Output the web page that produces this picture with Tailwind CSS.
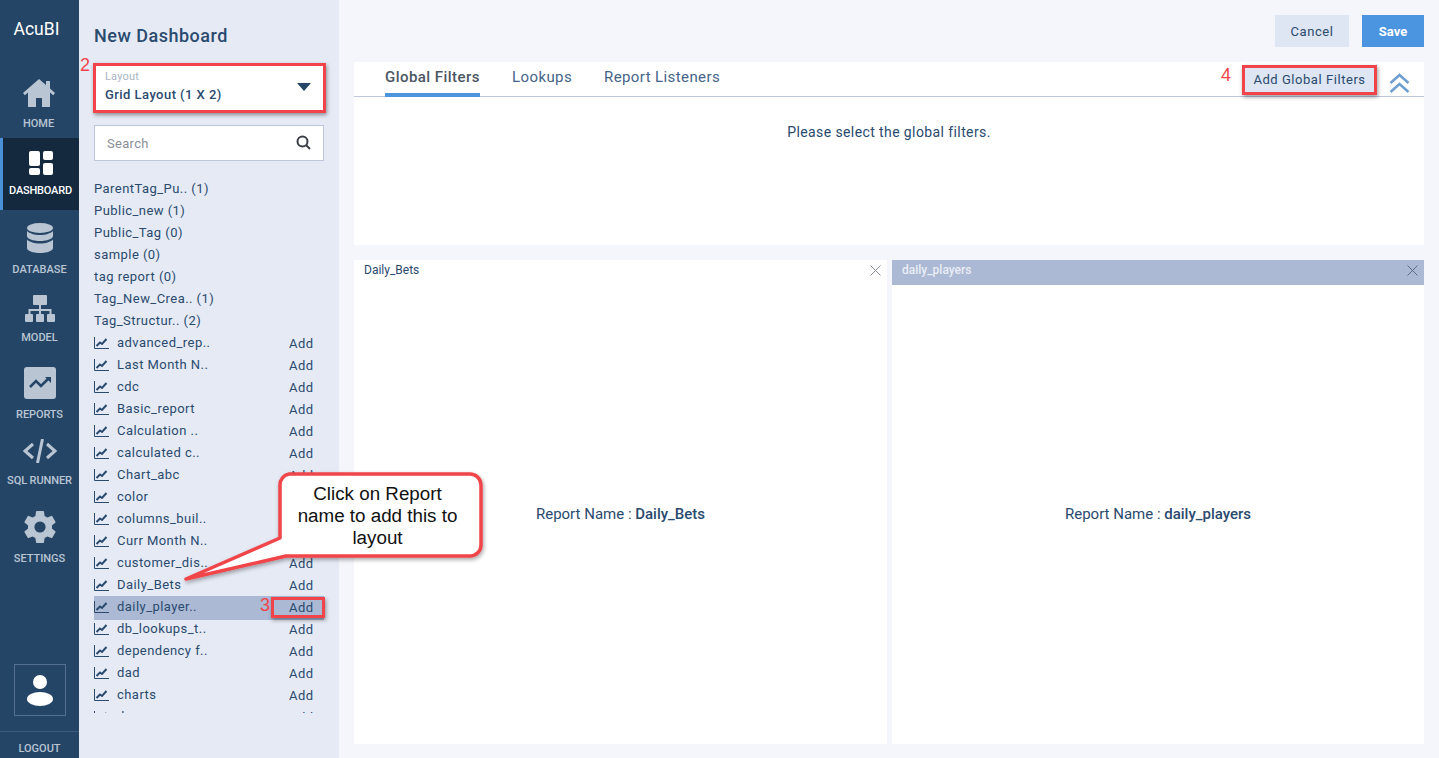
<!DOCTYPE html>
<html lang="en">
<head>
    <meta charset="UTF-8">
    <title>AcuBI - New Dashboard</title>
    <script src="https://cdn.jsdelivr.net/npm/@tailwindcss/browser@4"></script>
</head>
<body class="font-['Roboto',sans-serif] bg-[#f4f6fb] text-[#2a4a6e] overflow-hidden">
<div class="relative flex w-[1439px] h-[758px] overflow-hidden">

    <!-- nav -->
    <aside class="w-[79px] shrink-0 bg-[#254567] flex flex-col text-[#b9c5d3] text-[11px] font-medium">
        <div class="h-[68px] pt-[19px] pr-[6px] text-center text-white text-[17.500px] leading-[20px] font-normal">AcuBI</div>
        <a class="h-[70px] flex flex-col items-center">
            <svg class="mt-[10px] w-[34px] h-[30px] -ml-[2px]" viewBox="0 0 34 30" fill="#b9c5d3"><path d="M17 1 1 15l1.800 2.200L6 14.600V29h8v-9h6v9h8V14.600l3.200 2.600L33 15l-5-4.400V3h-4v4L17 1z"/></svg>
            <span class="mt-[9px] -ml-[2px] leading-[14px]">HOME</span>
        </a>
        <a class="h-[72px] flex flex-col items-center bg-[#14283e] border-l-[3px] border-[#4a90d9] text-white">
            <svg class="mt-[13px] w-[24px] h-[24px]" viewBox="0 0 24 24" fill="#fff"><rect x="0" y="0" width="11" height="15" rx="2"/><rect x="14" y="0" width="10" height="9" rx="2"/><rect x="0" y="17" width="11" height="7" rx="2"/><rect x="14" y="12" width="10" height="12" rx="2"/></svg>
            <span class="mt-[9px] -ml-[1px] leading-[14px] tracking-[-0.2px]">DASHBOARD</span>
        </a>
        <a class="h-[72px] flex flex-col items-center">
            <svg class="mt-[13px] w-[26px] h-[30px]" viewBox="0 0 26 30" fill="#b9c5d3"><ellipse cx="13" cy="5" rx="13" ry="5"/><path d="M0 8v5c0 2.800 5.800 5 13 5s13-2.200 13-5V8c-2.500 2.500-7.500 4-13 4S2.500 10.500 0 8z"/><path d="M0 16.500V25c0 2.800 5.800 5 13 5s13-2.200 13-5v-8.500c-2.500 2.500-7.500 4-13 4s-10.500-1.500-13-4z"/></svg>
            <span class="mt-[10px] leading-[14px]">DATABASE</span>
        </a>
        <a class="h-[68px] flex flex-col items-center">
            <svg class="mt-[13px] w-[30px] h-[28px]" viewBox="0 0 30 28" fill="#b9c5d3"><rect x="8" y="0" width="14" height="10" rx="1"/><rect x="14" y="10" width="2" height="9"/><path d="M3.500 19v-5h23v5h-2v-3h-19v3z"/><rect x="0" y="19" width="8" height="8" rx="1"/><rect x="11" y="19" width="8" height="8" rx="1"/><rect x="22" y="19" width="8" height="8" rx="1"/></svg>
            <span class="mt-[8px] leading-[14px]">MODEL</span>
        </a>
        <a class="h-[75px] flex flex-col items-center">
            <svg class="mt-[17px] w-[32px] h-[32px]" viewBox="0 0 32 32"><rect width="32" height="32" rx="3" fill="#b9c5d3"/><path d="M6 20l6-6 5 5 8-8" fill="none" stroke="#254567" stroke-width="2.500"/><path d="M21 10h6v6z" fill="#254567"/></svg>
            <span class="mt-[9px] leading-[14px] tracking-[-0.1px]">REPORTS</span>
        </a>
        <a class="h-[67px] flex flex-col items-center">
            <svg class="mt-[14px] w-[36px] h-[24px]" viewBox="0 0 36 24" fill="none" stroke="#b9c5d3" stroke-width="3"><path d="M11 5 3 12l8 7M25 5l8 7-8 7"/><path d="M20.500 0 15.500 24"/></svg>
            <span class="mt-[11px] leading-[14px] tracking-[-0.1px] whitespace-nowrap">SQL RUNNER</span>
        </a>
        <a class="h-[78px] flex flex-col items-center">
            <svg class="mt-[19px] w-[32px] h-[32px]" viewBox="2 2 20 20" fill="#b9c5d3"><path d="M19.430 12.980c.04-.32.070-.64.070-.98s-.03-.66-.07-.98l2.110-1.650c.19-.15.240-.42.120-.64l-2-3.460c-.12-.22-.39-.3-.61-.22l-2.490 1c-.52-.4-1.080-.73-1.690-.98l-.38-2.650A.488.488 0 0 0 14 2h-4c-.25 0-.46.180-.49.420l-.38 2.650c-.61.250-1.170.59-1.690.98l-2.490-1c-.23-.09-.49 0-.61.220l-2 3.460c-.13.220-.07.490.12.640l2.110 1.650c-.04.320-.07.650-.07.980s.03.660.07.980l-2.110 1.650c-.19.150-.24.420-.12.640l2 3.460c.12.220.39.300.61.220l2.490-1c.52.400 1.080.730 1.690.980l.38 2.650c.03.240.24.420.49.420h4c.25 0 .46-.18.49-.42l.38-2.650c.61-.25 1.170-.59 1.690-.98l2.490 1c.23.090.49 0 .61-.22l2-3.460c.12-.22.070-.49-.12-.64l-2.110-1.650zM12 15.500a3.500 3.500 0 1 1 0-7 3.500 3.500 0 0 1 0 7z"/></svg>
            <span class="mt-[9px] leading-[14px]">SETTINGS</span>
        </a>
        <div class="mt-[94px] ml-[14px] w-[52px] h-[52px] border border-[#54708e] flex items-center justify-center">
            <svg class="w-[28px] h-[32px]" viewBox="0 0 28 32" fill="#fff"><circle cx="14" cy="8" r="7"/><ellipse cx="14" cy="25" rx="13" ry="7"/></svg>
        </div>
        <div class="mt-[15px] border-t border-[#3f5c7c] pt-[10px] text-center leading-[14px]">LOGOUT</div>
    </aside>

    <!-- report list -->
    <section class="w-[260px] shrink-0 bg-[#e6eaf5] px-[15px] flex flex-col">
        <h1 class="mt-[25px] text-[18px] leading-[22px] font-medium tracking-[0.5px]">New Dashboard</h1>
        <div class="mt-[19px] h-[45px] bg-white px-[11px] pt-[5px] flex justify-between">
            <div>
                <div class="text-[11px] leading-[12px] text-[#aab4c4] tracking-[0.2px]">Layout</div>
                <div class="mt-[3px] text-[13px] leading-[18px] font-medium tracking-[0.45px]">Grid Layout (1 X 2)</div>
            </div>
            <svg class="mt-[12px] mr-[2px] w-[14px] h-[8px]" viewBox="0 0 14 8" fill="#254567"><path d="M0 0h14L7 8z"/></svg>
        </div>
        <div class="mt-[14px] h-[36px] bg-white border border-[#bcc7dc] px-[12px] flex items-center justify-between text-[13px] text-[#8a8f98] tracking-[0.3px]">
            <span class="mt-[2px]">Search</span>
            <svg class="w-[15px] h-[15px] -mt-[2px]" viewBox="0 0 15 15" fill="none" stroke="#3a3f45" stroke-width="2"><circle cx="6.500" cy="6.500" r="5"/><path d="m10 10 4 4"/></svg>
        </div>

        <div class="mt-[17px] text-[13px] leading-[22px] tracking-[0.45px]">
            <div>ParentTag_Pu.. (1)</div>
            <div>Public_new (1)</div>
            <div>Public_Tag (0)</div>
            <div>sample (0)</div>
            <div>tag report (0)</div>
            <div>Tag_New_Crea.. (1)</div>
            <div>Tag_Structur.. (2)</div>
            <!-- reports -->
            <div class="h-[381px] overflow-hidden">
                <div class="flex items-center h-[22px]"><svg class="w-[15px] h-[12px] mr-[8px]" viewBox="0 0 15 12" fill="none" stroke="#2a4a6e"><path d="M.5 0v11.500H15"/><path d="m2.500 9 3.500-3.500 2 1.500 4.500-5" stroke-width="2"/></svg><span class="flex-1">advanced_rep..</span><span class="w-[35px] mt-[2px]">Add</span></div>
                <div class="flex items-center h-[22px]"><svg class="w-[15px] h-[12px] mr-[8px]" viewBox="0 0 15 12" fill="none" stroke="#2a4a6e"><path d="M.5 0v11.500H15"/><path d="m2.500 9 3.500-3.500 2 1.500 4.500-5" stroke-width="2"/></svg><span class="flex-1">Last Month N..</span><span class="w-[35px] mt-[2px]">Add</span></div>
                <div class="flex items-center h-[22px]"><svg class="w-[15px] h-[12px] mr-[8px]" viewBox="0 0 15 12" fill="none" stroke="#2a4a6e"><path d="M.5 0v11.500H15"/><path d="m2.500 9 3.500-3.500 2 1.500 4.500-5" stroke-width="2"/></svg><span class="flex-1">cdc</span><span class="w-[35px] mt-[2px]">Add</span></div>
                <div class="flex items-center h-[22px]"><svg class="w-[15px] h-[12px] mr-[8px]" viewBox="0 0 15 12" fill="none" stroke="#2a4a6e"><path d="M.5 0v11.500H15"/><path d="m2.500 9 3.500-3.500 2 1.500 4.500-5" stroke-width="2"/></svg><span class="flex-1">Basic_report</span><span class="w-[35px] mt-[2px]">Add</span></div>
                <div class="flex items-center h-[22px]"><svg class="w-[15px] h-[12px] mr-[8px]" viewBox="0 0 15 12" fill="none" stroke="#2a4a6e"><path d="M.5 0v11.500H15"/><path d="m2.500 9 3.500-3.500 2 1.500 4.500-5" stroke-width="2"/></svg><span class="flex-1">Calculation ..</span><span class="w-[35px] mt-[2px]">Add</span></div>
                <div class="flex items-center h-[22px]"><svg class="w-[15px] h-[12px] mr-[8px]" viewBox="0 0 15 12" fill="none" stroke="#2a4a6e"><path d="M.5 0v11.500H15"/><path d="m2.500 9 3.500-3.500 2 1.500 4.500-5" stroke-width="2"/></svg><span class="flex-1">calculated c..</span><span class="w-[35px] mt-[2px]">Add</span></div>
                <div class="flex items-center h-[22px]"><svg class="w-[15px] h-[12px] mr-[8px]" viewBox="0 0 15 12" fill="none" stroke="#2a4a6e"><path d="M.5 0v11.500H15"/><path d="m2.500 9 3.500-3.500 2 1.500 4.500-5" stroke-width="2"/></svg><span class="flex-1">Chart_abc</span><span class="w-[35px] mt-[2px]">Add</span></div>
                <div class="flex items-center h-[22px]"><svg class="w-[15px] h-[12px] mr-[8px]" viewBox="0 0 15 12" fill="none" stroke="#2a4a6e"><path d="M.5 0v11.500H15"/><path d="m2.500 9 3.500-3.500 2 1.500 4.500-5" stroke-width="2"/></svg><span class="flex-1">color</span><span class="w-[35px] mt-[2px]">Add</span></div>
                <div class="flex items-center h-[22px]"><svg class="w-[15px] h-[12px] mr-[8px]" viewBox="0 0 15 12" fill="none" stroke="#2a4a6e"><path d="M.5 0v11.500H15"/><path d="m2.500 9 3.500-3.500 2 1.500 4.500-5" stroke-width="2"/></svg><span class="flex-1">columns_buil..</span><span class="w-[35px] mt-[2px]">Add</span></div>
                <div class="flex items-center h-[22px]"><svg class="w-[15px] h-[12px] mr-[8px]" viewBox="0 0 15 12" fill="none" stroke="#2a4a6e"><path d="M.5 0v11.500H15"/><path d="m2.500 9 3.500-3.500 2 1.500 4.500-5" stroke-width="2"/></svg><span class="flex-1">Curr Month N..</span><span class="w-[35px] mt-[2px]">Add</span></div>
                <div class="flex items-center h-[22px]"><svg class="w-[15px] h-[12px] mr-[8px]" viewBox="0 0 15 12" fill="none" stroke="#2a4a6e"><path d="M.5 0v11.500H15"/><path d="m2.500 9 3.500-3.500 2 1.500 4.500-5" stroke-width="2"/></svg><span class="flex-1">customer_dis..</span><span class="w-[35px] mt-[2px]">Add</span></div>
                <div class="flex items-center h-[22px]"><svg class="w-[15px] h-[12px] mr-[8px]" viewBox="0 0 15 12" fill="none" stroke="#2a4a6e"><path d="M.5 0v11.500H15"/><path d="m2.500 9 3.500-3.500 2 1.500 4.500-5" stroke-width="2"/></svg><span class="flex-1">Daily_Bets</span><span class="w-[35px] mt-[2px]">Add</span></div>
                <div class="flex items-center h-[24px] pb-[2px] -mb-[2px] bg-[#abb9d4]"><svg class="w-[15px] h-[12px] mr-[8px]" viewBox="0 0 15 12" fill="none" stroke="#2a4a6e"><path d="M.5 0v11.500H15"/><path d="m2.500 9 3.500-3.500 2 1.500 4.500-5" stroke-width="2"/></svg><span class="flex-1">daily_player..</span><span class="w-[35px] mt-[2px]">Add</span></div>
                <div class="flex items-center h-[22px]"><svg class="w-[15px] h-[12px] mr-[8px]" viewBox="0 0 15 12" fill="none" stroke="#2a4a6e"><path d="M.5 0v11.500H15"/><path d="m2.500 9 3.500-3.500 2 1.500 4.500-5" stroke-width="2"/></svg><span class="flex-1">db_lookups_t..</span><span class="w-[35px] mt-[2px]">Add</span></div>
                <div class="flex items-center h-[22px]"><svg class="w-[15px] h-[12px] mr-[8px]" viewBox="0 0 15 12" fill="none" stroke="#2a4a6e"><path d="M.5 0v11.500H15"/><path d="m2.500 9 3.500-3.500 2 1.500 4.500-5" stroke-width="2"/></svg><span class="flex-1">dependency f..</span><span class="w-[35px] mt-[2px]">Add</span></div>
                <div class="flex items-center h-[22px]"><svg class="w-[15px] h-[12px] mr-[8px]" viewBox="0 0 15 12" fill="none" stroke="#2a4a6e"><path d="M.5 0v11.500H15"/><path d="m2.500 9 3.500-3.500 2 1.500 4.500-5" stroke-width="2"/></svg><span class="flex-1">dad</span><span class="w-[35px] mt-[2px]">Add</span></div>
                <div class="flex items-center h-[22px]"><svg class="w-[15px] h-[12px] mr-[8px]" viewBox="0 0 15 12" fill="none" stroke="#2a4a6e"><path d="M.5 0v11.500H15"/><path d="m2.500 9 3.500-3.500 2 1.500 4.500-5" stroke-width="2"/></svg><span class="flex-1">charts</span><span class="w-[35px] mt-[2px]">Add</span></div>
                <div class="flex items-center h-[22px]"><svg class="w-[15px] h-[12px] mr-[8px]" viewBox="0 0 15 12" fill="none" stroke="#2a4a6e"><path d="M.5 0v11.500H15"/><path d="m2.500 9 3.500-3.500 2 1.500 4.500-5" stroke-width="2"/></svg><span class="flex-1">dew</span><span class="w-[35px] mt-[2px]">Add</span></div>
            </div>
        </div>
    </section>

    <!-- main -->
    <main class="flex-1 pl-[15px] pr-[15px] flex flex-col">
        <div class="h-[62px] pt-[15px] flex justify-end gap-[13px] text-[13px]">
            <button class="w-[74px] h-[32px] pt-[1px] bg-[#dee5f3] tracking-[0.55px]">Cancel</button>
            <button class="w-[62px] h-[32px] pt-[1px] bg-[#4a94e0] text-white font-bold">Save</button>
        </div>
        <div class="h-[183px] bg-white flex flex-col">
            <div class="h-[35px] border-b border-[#bcc7dc] pl-[31px] flex text-[15px] leading-[30px] tracking-[0.4px]">
                <div class="w-[95px] h-[35px] border-b-[4px] border-[#4a94e0] text-[#4b5563] font-medium whitespace-nowrap tracking-[0.45px]">Global Filters</div>
                <div class="ml-[32px] text-[#45648a]">Lookups</div>
                <div class="ml-[32px] text-[#45648a]">Report Listeners</div>
            </div>
            <p class="mt-[26px] text-center text-[14px] leading-[18px] tracking-[0.4px]">Please select the global filters.</p>
        </div>
        <div class="mt-[15px] h-[484px] flex gap-[5px] text-[15px]">
            <div class="w-[533px] bg-white flex flex-col">
                <div class="h-[25px] px-[10px] pb-[5px] flex items-center justify-between text-[12px] bg-white">
                    <span>Daily_Bets</span>
                    <svg class="w-[11px] h-[11px] -mr-[4px]" viewBox="0 0 11 11" stroke="#8a8f98"><path d="m.5.5 10 10M10.500.5l-10 10"/></svg>
                </div>
                <div class="flex-1 flex items-center justify-center"><span>Report Name : <b class="font-medium">Daily_Bets</b></span></div>
            </div>
            <div class="flex-1 bg-white flex flex-col">
                <div class="h-[25px] px-[10px] pb-[5px] flex items-center justify-between text-[12px] font-medium bg-[#abb9d4] text-[#e9edf5]">
                    <span>daily_players</span>
                    <svg class="w-[11px] h-[11px] -mr-[4px]" viewBox="0 0 11 11" stroke="#5c6b82"><path d="m.5.5 10 10M10.500.5l-10 10"/></svg>
                </div>
                <div class="flex-1 flex items-center justify-center"><span>Report Name : <b class="font-medium">daily_players</b></span></div>
            </div>
        </div>
    </main>

    <!-- overlays on the top panel -->
    <div class="absolute left-[1242px] top-[65px] w-[135px] h-[30px] bg-[#dee5f3] border-[3px] border-[#f0444a] shadow-[1px_2px_4px_rgba(0,0,0,0.4)] flex items-center justify-center text-[13px] tracking-[0.55px]">Add Global Filters</div>
    <svg class="absolute left-[1389px] top-[73px] w-[21px] h-[20px]" viewBox="0 0 21 20" fill="none" stroke="#6f9fd0" stroke-width="2.500"><path d="m1.500 10 9-8 9 8M1.500 19l9-8 9 8"/></svg>

    <!-- tutorial annotations -->
    <div class="absolute left-[93px] top-[63px] w-[233px] h-[50px] border-[3px] border-[#f0444a] shadow-[1px_2px_4px_rgba(0,0,0,0.4)]"></div>
    <div class="absolute left-[271px] top-[597px] w-[54px] h-[21px] border-[3px] border-[#f0444a] shadow-[1px_2px_4px_rgba(0,0,0,0.4)]"></div>
    <span class="absolute left-[80px] top-[54px] text-[18px] leading-[22px] text-[#f0444a] font-['Liberation_Sans',sans-serif]">2</span>
    <span class="absolute left-[260px] top-[594px] text-[18px] leading-[22px] text-[#f0444a] font-['Liberation_Sans',sans-serif]">3</span>
    <span class="absolute left-[1221px] top-[64px] text-[18px] leading-[22px] text-[#f0444a] font-['Liberation_Sans',sans-serif]">4</span>

    <svg class="absolute left-[0px] top-[0px] w-[1439px] h-[758px] pointer-events-none" viewBox="0 0 1439 758">
        <defs><filter id="sh" x="-10%" y="-10%" width="125%" height="125%"><feDropShadow dx="1" dy="2" stdDeviation="2" flood-color="#000" flood-opacity="0.35"/></filter></defs>
        <path d="M289 474H470a11 11 0 0 1 11 11V545a11 11 0 0 1-11 11H286L186 579 280 538V485a11 11 0 0 1 9-11z" fill="#fff" stroke="#f0444a" stroke-width="3.500" stroke-linejoin="round" filter="url(#sh)"/>
    </svg>
    <div class="absolute left-[290px] top-[483px] w-[175px] text-center text-[18.800px] leading-[22px] text-[#111] font-['Liberation_Sans',sans-serif]">Click on Report name to add this to layout</div>
</div>
</body>
</html>
